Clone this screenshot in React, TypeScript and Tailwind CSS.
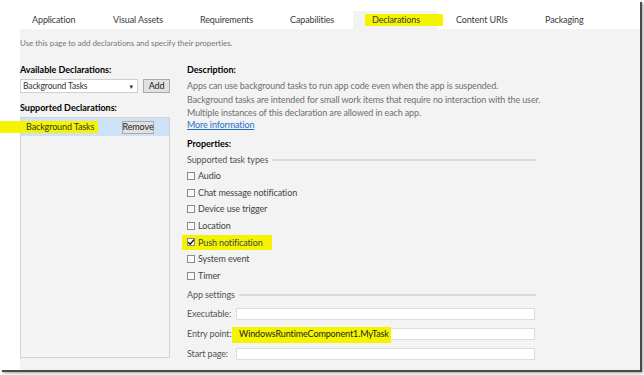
import React from "react";

const tabs = [
  { label: "Application", w: 81 },
  { label: "Visual Assets", w: 87 },
  { label: "Requirements", w: 90 },
  { label: "Capabilities", w: 82 },
  { label: "Declarations", w: 84, active: true },
  { label: "Content URIs", w: 89 },
  { label: "Packaging", w: 80 },
];

const tasks = [
  { label: "Audio" },
  { label: "Chat message notification" },
  { label: "Device use trigger" },
  { label: "Location" },
  { label: "Push notification", checked: true },
  { label: "System event" },
  { label: "Timer" },
];

function Check({ checked }: { checked?: boolean }) {
  return (
    <div className="w-[8px] h-[8px] border border-[#8a8a8a] bg-[#fafafa] relative shrink-0">
      {checked && (
        <svg viewBox="0 0 8 8" className="absolute left-[-1px] top-[-1px] w-[8px] h-[8px]">
          <path d="M1.2 4.2 L3.2 6.2 L7 1.6" fill="none" stroke="#111" strokeWidth="1.4" />
        </svg>
      )}
    </div>
  );
}

function Field({ label, value, hl }: { label: string; value?: string; hl?: boolean }) {
  return (
    <div className="flex items-center h-[12px]">
      <div className="w-[49px] text-[#555] leading-[12px] whitespace-nowrap">{label}</div>
      <div className="relative w-[299px] h-[12px] bg-white border border-[#dcdcdc] flex items-center pl-[2px] text-[#222]">
        {hl && <div className="absolute left-[-5px] top-[-2px] w-[159px] h-[16px] bg-[#f4f400]" />}
        {value && <span className="relative whitespace-nowrap">{value}</span>}
      </div>
    </div>
  );
}

export default function App() {
  return (
    <div
      className="w-[644px] h-[375px] bg-white overflow-hidden text-[9px] whitespace-nowrap tracking-[-0.12px]"
      style={{ fontFamily: 'Lato, "Open Sans", sans-serif' }}
    >
      <div className="w-[640px] h-[370px] flex flex-col shadow-[2px_2px_0_#4a4a4a,3px_3px_3px_#9a9a9a]">
        {/* tab bar */}
        <div className="h-[29px] bg-white flex items-end pl-[13px] shrink-0">
          {tabs.map((t) => (
            <div
              key={t.label}
              className={`relative h-[18px] flex items-center pl-[19px] text-[#3a3a3a] ${t.active ? "bg-[#f3f3f3]" : ""}`}
              style={{ width: t.w }}
            >
              {t.active && <div className="absolute left-[12px] top-[3px] w-[78px] h-[12px] bg-[#f4f400]" />}
              <span className="relative">{t.label}</span>
            </div>
          ))}
        </div>
        <div className="flex flex-1">
          <div className="w-[20px] bg-white shrink-0" />
          <div className="flex-1 bg-[#f3f3f3] flex flex-col">
            <div className="h-[28px] flex items-center text-[#777] text-[8px] tracking-[-0.05px]">
              Use this page to add declarations and specify their properties.
            </div>
            <div className="flex">
              {/* left column */}
              <div className="w-[150px] flex flex-col">
                <div className="mt-[7px] leading-[12px] font-bold text-black tracking-normal">Available Declarations:</div>
                <div className="mt-[3px] flex items-center">
                  <div className="w-[118px] h-[14px] bg-white border border-[#cfcfcf] flex items-center justify-between pl-[2px] pr-[3px] text-[#333] text-[8.5px]">
                    <span>Background Tasks</span>
                    <span className="text-[6px] text-[#333]">▼</span>
                  </div>
                  <div className="ml-[5px] w-[27px] h-[14px] bg-[#e1e1e1] border border-[#a9a9a9] flex items-center justify-center text-[#222]">
                    Add
                  </div>
                </div>
                <div className="mt-[9px] leading-[12px] font-bold text-black tracking-normal">Supported Declarations:</div>
                <div className="mt-[3px] h-[241px] border border-[#d4d4d4] bg-[#f4f4f4]">
                  <div className="h-[18px] bg-[#cde2f6] flex items-center justify-between pl-[5px] pr-[15px] relative">
                    <div className="absolute left-[-21px] top-[3px] w-[98px] h-[12px] bg-[#f4f400]" />
                    <span className="relative text-[#333]">Background Tasks</span>
                    <div className="w-[32px] h-[13px] bg-[#e1e1e1] border border-[#a9a9a9] flex items-center justify-center text-[#222]">
                      Remove
                    </div>
                  </div>
                </div>
              </div>
              {/* right column */}
              <div className="ml-[17px] w-[349px] flex flex-col">
                <div className="mt-[7px] leading-[12px] font-bold text-black tracking-normal">Description:</div>
                <div className="mt-[3px] leading-[14px] text-[#707070]">
                  <div>Apps can use background tasks to run app code even when the app is suspended.</div>
                  <div>Background tasks are intended for small work items that require no interaction with the user.</div>
                </div>
                <div className="leading-[12px] text-[#707070]">Multiple instances of this declaration are allowed in each app.</div>
                <div className="leading-[12px] text-[#1e6fc8] underline">More information</div>
                <div className="mt-[7px] leading-[12px] font-bold text-black tracking-normal">Properties:</div>
                <div className="mt-[4px] leading-[12px] flex items-center text-[#555]">
                  <span>Supported task types</span>
                  <div className="ml-[4px] flex-1 h-[2px] bg-[#dadada]" />
                </div>
                <div className="mt-[1.7px] flex flex-col">
                  {tasks.map((t) => (
                    <div key={t.label} className="h-[16.6px] flex items-center relative">
                      {t.checked && <div className="absolute left-[-5px] top-[1px] w-[90px] h-[15px] bg-[#f4f400]" />}
                      <div className="relative flex items-center">
                        <Check checked={t.checked} />
                        <span className="ml-[3px] text-[#444]">{t.label}</span>
                      </div>
                    </div>
                  ))}
                </div>
                <div className="mt-[5px] leading-[12px] flex items-center text-[#555]">
                  <span>App settings</span>
                  <div className="ml-[4px] flex-1 h-[2px] bg-[#dadada]" />
                </div>
                <div className="mt-[7px] flex flex-col gap-[8px]">
                  <Field label="Executable:" />
                  <Field label="Entry point:" value="WindowsRuntimeComponent1.MyTask" hl />
                  <Field label="Start page:" />
                </div>
              </div>
            </div>
          </div>
        </div>
      </div>
    </div>
  );
}
